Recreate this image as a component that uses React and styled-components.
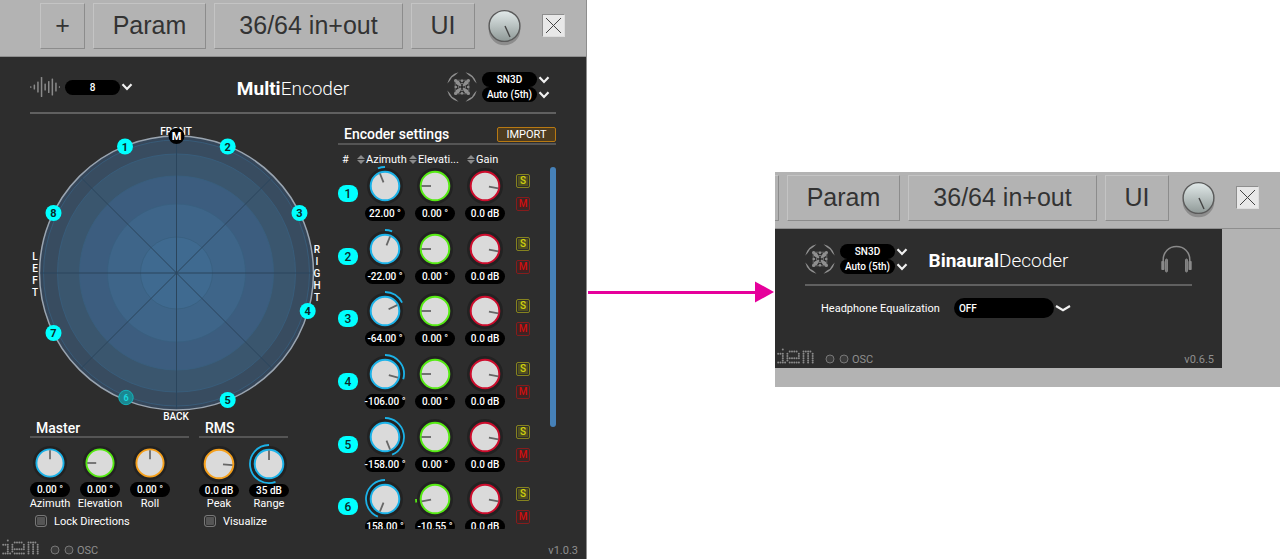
import React, { useState } from "react";
import styled, { createGlobalStyle } from "styled-components";

const sources = [
  { id: 1, azimuth: 22, elevation: 0, x: 95, y: 24.5 },
  { id: 2, azimuth: -22, elevation: 0, x: 197.7, y: 24.5 },
  { id: 3, azimuth: -64, elevation: 0, x: 269.5, y: 91 },
  { id: 4, azimuth: -106, elevation: 0, x: 277.7, y: 189 },
  { id: 5, azimuth: -158, elevation: 0, x: 197.7, y: 278 },
  { id: 6, azimuth: 158, elevation: -10.55, x: 96, y: 275.5, faded: true },
  { id: 7, x: 23.5, y: 211 },
  { id: 8, x: 23.5, y: 91 },
];

const rings = [
  { r: 137, fill: "#36475a" },
  { r: 133, fill: "#384c60" },
  { r: 119, fill: "#3a566e" },
  { r: 97, fill: "#3c5d7f" },
  { r: 69, fill: "#3e6589" },
  { r: 36, fill: "#3f6a90" },
];

const colors = {
  blue: "#1bb2e8",
  green: "#55ea12",
  red: "#cc0c2c",
  orange: "#f5a01c",
};

// 0 degrees points up, positive turns clockwise
const polar = (deg, r) => {
  const a = (deg * Math.PI) / 180;
  return [20 + r * Math.sin(a), 20 - r * Math.cos(a)];
};

const arcPath = (from, to, r) => {
  const [x1, y1] = polar(from, r);
  const [x2, y2] = polar(to, r);
  const large = Math.abs(to - from) > 180 ? 1 : 0;
  const sweep = to > from ? 1 : 0;
  return `M${x1} ${y1} A${r} ${r} 0 ${large} ${sweep} ${x2} ${y2}`;
};

const Knob = ({ name, color, angle, arc, text, size = 40, label }) => {
  const [x1, y1] = polar(angle, 4);
  const [x2, y2] = polar(angle, 13.5);
  return (
    <KnobCell>
      <Dial $size={size}>
        <svg viewBox="0 0 40 40" width={size} height={size}>
          <circle cx="20" cy="20" r="18" fill="#222" />
          <circle
            cx="20"
            cy="20"
            r="14.3"
            fill="#dadada"
            stroke={colors[color]}
            strokeWidth="2"
          />
          <path
            d={`M${x1} ${y1}L${x2} ${y2}`}
            stroke="#666"
            strokeWidth="1.8"
          />
          {arc && (
            <path
              d={arcPath(arc[0], arc[1], 19)}
              fill="none"
              stroke={colors[color]}
              strokeWidth="1.8"
            />
          )}
        </svg>
        <input type="range" min="-180" max="180" aria-label={name} />
      </Dial>
      <Value $low={size === 40 && !!label}>{text}</Value>
      {label && <KnobLabel>{label}</KnobLabel>}
    </KnobCell>
  );
};

const Chevron = ({ wide }) => (
  <svg
    width={wide ? 16 : 12}
    height="8"
    viewBox={wide ? "0 0 16 8" : "0 0 12 8"}
    fill="none"
    stroke="#f0f0f0"
    strokeWidth="2.2"
  >
    <path d={wide ? "M1 2L8 6.2L15 2" : "M1.5 1.2L6 6L10.5 1.2"} />
  </svg>
);

const Dropdown = ({ name, value, variant }) => (
  <SelectLine>
    <Select aria-label={name} defaultValue={value} $variant={variant}>
      <option>{value}</option>
    </Select>
    <Chevron wide={variant === "wide"} />
  </SelectLine>
);

const AmbisonicIcon = () => (
  <svg width="30" height="30" viewBox="0 0 30 30" fill="#8f8f8f">
    {[0, 90, 180, 270].map((a) => (
      <g key={a} transform={`rotate(${a} 15 15)`}>
        <path d="M0.3 11.5 A15.2 15.2 0 0 1 11.5 0.3 Q8.5 3.4 6.3 4.4 Q4.8 5 4.4 6.3 Q3.4 8.5 0.3 11.5Z" />
        <path d="M8 8 L12 9 L14.4 13.6 L13.6 14.4 L9 12Z" />
        <circle cx="8.6" cy="8.6" r="1.6" />
        <circle cx="15" cy="8.8" r="1.3" />
        <circle cx="15" cy="11.6" r="0.8" />
        <circle cx="12" cy="12" r="1.6" />
        <path d="M8 8.2H22" stroke="#8a8a8a" strokeWidth="0.6" />
      </g>
    ))}
  </svg>
);

const waveBars = [1.5, 5, 11, 20, 7, 12, 17, 9, 1.5];

const WaveIcon = () => (
  <svg width="30" height="20" viewBox="0 0 30 20">
    {waveBars.map((h, i) => (
      <rect
        key={i}
        x={i * 3.6}
        y={10 - h / 2}
        width="1.5"
        height={h}
        rx="0.6"
        fill="#8a8a8a"
      />
    ))}
  </svg>
);

const HeadphonesIcon = () => (
  <svg width="31" height="28" viewBox="0 0 31 28" fill="none" stroke="#8a8a8a">
    <path d="M2.2 16.5V15C2.2 6.8 8 1.5 15.5 1.5S28.8 6.8 28.8 15V16.5" strokeWidth="1.5" />
    <rect x="0.3" y="16" width="3.2" height="9" fill="#8a8a8a" stroke="none" rx="0.8" />
    <rect x="27.5" y="16" width="3.2" height="9" fill="#8a8a8a" stroke="none" rx="0.8" />
    <rect x="4.6" y="14" width="1.8" height="13" rx="0.8" fill="#777" />
    <rect x="24.6" y="14" width="1.8" height="13" rx="0.8" fill="#777" />
  </svg>
);

const logoDots = [
  "..#.............",
  ".....####..####.",
  "###.#....#.#.#.#",
  "..#.#....#.#.#.#",
  "..#.######.#.#.#",
  "..#.#......#.#.#",
  "####.#####.#.#.#",
];

const IemLogo = () => (
  <svg width="37" height="16" viewBox="0 0 37 16" fill="#8a8a8a" role="img" aria-label="iem">
    {logoDots.map((row, y) =>
      [...row].map(
        (c, x) =>
          c === "#" && (
            <circle key={`${x}-${y}`} cx={1.2 + x * 2.3} cy={1.4 + y * 2.2} r="1" />
          )
      )
    )}
  </svg>
);

const Toolbar = ({ showAdd }) => (
  <Bar>
    <BarButton $width={45} aria-label="Add">
      {showAdd && "+"}
    </BarButton>
    <BarButton $width={113}>Param</BarButton>
    <BarButton $width={189}>36/64 in+out</BarButton>
    <BarButton $width={64}>UI</BarButton>
    <VolumeDial>
      <svg width="33" height="38" viewBox="0 0 33 38">
        <defs>
          <linearGradient id="metal" x1="0" y1="0" x2="0" y2="1">
            <stop offset="0" stopColor="#e2eaea" />
            <stop offset="1" stopColor="#8f9997" />
          </linearGradient>
        </defs>
        <circle cx="16.5" cy="20.5" r="15.8" fill="#8c8c8c" />
        <circle cx="16.5" cy="17" r="15.4" fill="url(#metal)" stroke="#5a5a5a" strokeWidth="1.4" />
        <path d="M17 17L22 28" stroke="#444" strokeWidth="1.4" />
      </svg>
      <input type="range" aria-label="Volume" />
    </VolumeDial>
    <Toggle>
      <input type="checkbox" defaultChecked aria-label="Toggle window" />
      <svg width="23" height="23" viewBox="0 0 23 23" stroke="#444" strokeWidth="1">
        <path d="M4 4L19 19M19 4L4 19" />
      </svg>
    </Toggle>
  </Bar>
);

const FormatSelects = () => (
  <Group>
    <AmbisonicIcon />
    <SelectStack>
      <Dropdown name="Normalization" value="SN3D" />
      <Dropdown name="Order" value="Auto (5th)" />
    </SelectStack>
  </Group>
);

const PluginFooter = ({ version }) => (
  <Footer>
    <IemLogo />
    <Osc>
      <svg width="24" height="10" viewBox="0 0 24 10" fill="#3a3a3a" stroke="#777">
        <circle cx="5" cy="5" r="4" />
        <circle cx="19" cy="5" r="4" />
      </svg>
      OSC
    </Osc>
    <Version>{version}</Version>
  </Footer>
);

const Sphere = () => (
  <SphereChart viewBox="0 0 294 300" role="img" aria-label="Source positions">
    <text x="146" y="13">FRONT</text>
    {rings.map((ring, i) => (
      <circle
        key={ring.r}
        cx="146.5"
        cy="151"
        r={ring.r}
        fill={ring.fill}
        stroke={i === 0 ? "#9aa5b1" : "#38607f"}
        strokeWidth={i === 0 ? 1.5 : 0.8}
      />
    ))}
    <path
      d="M146.5 15V287M10.5 151H282.5M51.5 56L241.5 246M241.5 56L51.5 246"
      stroke="#2b455c"
      strokeWidth="1"
    />
    <text x="146" y="298">BACK</text>
    {[..."LEFT"].map((c, i) => (
      <text key={i} x="5" y={138 + i * 12}>{c}</text>
    ))}
    {[..."RIGHT"].map((c, i) => (
      <text key={i} x="287" y={131 + i * 12}>{c}</text>
    ))}
    {sources.map((s) => (
      <g key={s.id}>
        <circle
          cx={s.x}
          cy={s.y}
          r={s.faded ? 7.2 : 8}
          fill={s.faded ? "#1b8791" : "#00ffff"}
          stroke={s.faded ? "#12b3bb" : "none"}
        />
        <text
          className={s.faded ? "node faded" : "node"}
          x={s.x}
          y={s.y + (s.faded ? 3 : 4)}
        >
          {s.id}
        </text>
      </g>
    ))}
    <circle cx="146.5" cy="14" r="8" fill="#000" />
    <text className="master" x="146.5" y="18">M</text>
  </SphereChart>
);

const SortButton = ({ children }) => (
  <Sort>
    <svg width="8" height="9" viewBox="0 0 8 9" fill="#8a8a8a">
      <path d="M0 4L4 0L8 4ZM0 5L4 9L8 5Z" />
    </svg>
    {children}
  </Sort>
);

const EncoderRow = ({ source }) => {
  const [solo, setSolo] = useState(false);
  const [mute, setMute] = useState(false);
  const { id, azimuth, elevation } = source;
  const elevationAngle = -90 + elevation;

  return (
    <Row>
      <Badge>{id}</Badge>
      <KnobGroup>
        <Knob
          name={`Azimuth ${id}`}
          color="blue"
          angle={-azimuth}
          arc={[0, -azimuth]}
          text={`${azimuth.toFixed(2)} °`}
        />
        <Knob
          name={`Elevation ${id}`}
          color="green"
          angle={elevationAngle}
          arc={elevation ? [-90, elevationAngle] : null}
          text={`${elevation.toFixed(2)} °`}
        />
        <Knob name={`Gain ${id}`} color="red" angle={100} text="0.0 dB" />
      </KnobGroup>
      <Switches>
        <SwitchButton $color="#d2d20f" $border="#85821f" $fill="#504f20" aria-pressed={solo} onClick={() => setSolo(!solo)}>
          S
        </SwitchButton>
        <SwitchButton $color="#cf1010" $border="#861c1c" $fill="#452020" aria-pressed={mute} onClick={() => setMute(!mute)}>
          M
        </SwitchButton>
      </Switches>
    </Row>
  );
};

const MultiEncoder = () => (
  <Window>
    <Toolbar showAdd />
    <Plugin>
      <Header>
        <Group>
          <WaveIcon />
          <Dropdown name="Number of sources" value="8" />
        </Group>
        <Title>
          <b>Multi</b>Encoder
        </Title>
        <FormatSelects />
      </Header>
      <Body>
        <div>
          <Sphere />
          <Panels>
            <Panel $width={159}>
              <PanelTitle>Master</PanelTitle>
              <KnobGroup>
                <Knob name="Master azimuth" label="Azimuth" color="blue" angle={0} size={38} text="0.00 °" />
                <Knob name="Master elevation" label="Elevation" color="green" angle={-90} size={38} text="0.00 °" />
                <Knob name="Master roll" label="Roll" color="orange" angle={0} size={38} text="0.00 °" />
              </KnobGroup>
              <Check>
                <input type="checkbox" />
                Lock Directions
              </Check>
            </Panel>
            <Panel $width={89}>
              <PanelTitle>RMS</PanelTitle>
              <KnobGroup>
                <Knob name="RMS peak" label="Peak" color="orange" angle={95} text="0.0 dB" />
                <Knob name="RMS range" label="Range" color="blue" angle={0} arc={[0, -200]} text="35 dB" />
              </KnobGroup>
              <Check>
                <input type="checkbox" />
                Visualize
              </Check>
            </Panel>
          </Panels>
        </div>
        <Encoder>
          <EncoderTitle>
            Encoder settings
            <ImportButton>IMPORT</ImportButton>
          </EncoderTitle>
          <Columns>
            <span>#</span>
            <SortButton>Azimuth</SortButton>
            <SortButton>Elevati...</SortButton>
            <SortButton>Gain</SortButton>
          </Columns>
          <ListView>
            <Rows>
              {sources.slice(0, 6).map((s) => (
                <EncoderRow key={s.id} source={s} />
              ))}
            </Rows>
            <ScrollThumb />
          </ListView>
        </Encoder>
      </Body>
      <PluginFooter version="v1.0.3" />
    </Plugin>
  </Window>
);

const BinauralDecoder = () => (
  <Window $lowered>
    <Toolbar />
    <Plugin $inset>
      <Header>
        <FormatSelects />
        <Title>
          <b>Binaural</b>Decoder
        </Title>
        <Group>
          <HeadphonesIcon />
        </Group>
      </Header>
      <Equalization>
        <span>Headphone Equalization</span>
        <Dropdown name="Headphone Equalization" value="OFF" variant="wide" />
      </Equalization>
      <PluginFooter version="v0.6.5" />
    </Plugin>
  </Window>
);

const App = () => (
  <>
    <GlobalStyle />
    <Page>
      <MultiEncoder />
      <Arrow>
        <i />
        <svg width="19" height="22" viewBox="0 0 19 22" fill="#e6009b">
          <path d="M0 0.5L19 11L0 21.5Z" />
        </svg>
      </Arrow>
      <BinauralDecoder />
    </Page>
  </>
);

const GlobalStyle = createGlobalStyle`
  * {
    box-sizing: border-box;
  }
  body {
    margin: 0;
    background: #fff;
    font-family: Roboto, sans-serif;
    color: #fff;
  }
  button, select, input {
    margin: 0;
    padding: 0;
    font-family: inherit;
  }
  svg {
    display: block;
    flex-shrink: 0;
  }
`;

const Page = styled.main`
  display: grid;
  grid-template-columns: 587fr 188fr 505fr;
  align-items: start;
`;

const Window = styled.section`
  min-width: 0;
  margin-top: ${(p) => (p.$lowered ? "172px" : "0")};
  padding-bottom: ${(p) => (p.$lowered ? "19px" : "0")};
  border-right: ${(p) => (p.$lowered ? "none" : "1px solid #8e8e8e")};
  background: #b3b3b3;
`;

const Bar = styled.div`
  display: flex;
  justify-content: flex-end;
  gap: 8px;
  height: 57px;
  padding: 3px 21px 0;
  overflow: hidden;
  border-bottom: 1px solid #8e8e8e;
`;

const BarButton = styled.button`
  flex-shrink: 0;
  width: ${(p) => p.$width}px;
  height: 46px;
  padding-bottom: 1px;
  border: 1px solid;
  border-color: #c4c4c4 #8c8c8c #8c8c8c #c4c4c4;
  background: #b3b3b3;
  color: #333;
  font-family: "Liberation Sans", Arial, sans-serif;
  font-size: 25px;
  white-space: nowrap;
`;

const VolumeDial = styled.div`
  position: relative;
  flex-shrink: 0;
  width: 33px;
  height: 38px;
  margin: 6px 13px 0 5px;

  input {
    position: absolute;
    inset: 0;
    width: 100%;
    opacity: 0;
  }
`;

const Toggle = styled.label`
  position: relative;
  flex-shrink: 0;
  width: 23px;
  height: 23px;
  margin-top: 11px;

  input {
    display: block;
    width: 23px;
    height: 23px;
    appearance: none;
    border: 1px solid;
    border-color: #8e8e8e #ddd #ddd #8e8e8e;
    background: #e8e8e8;
  }
  svg {
    position: absolute;
    inset: 0;
    pointer-events: none;
  }
  input:not(:checked) + svg {
    display: none;
  }
`;

const Plugin = styled.div`
  width: ${(p) => (p.$inset ? "calc(100% - 58px)" : "100%")};
  background: #2d2d2d;
`;

const Header = styled.header`
  display: grid;
  grid-template-columns: 1fr auto 1fr;
  align-items: center;
  height: 57px;
  margin: 0 30px;
  padding-top: 5px;
  border-bottom: 2px solid #606060;
`;

const Group = styled.div`
  display: flex;
  align-items: center;
  gap: 5px;

  &:last-child {
    justify-self: end;
  }
  ${Header} > &:last-child:has(select) {
    padding-right: 6px;
  }
`;

const Title = styled.h1`
  margin: 0;
  padding-top: 3px;
  font-size: 19px;
  font-weight: 300;
  line-height: 24px;

  b {
    font-weight: 700;
  }
`;

const SelectStack = styled.div`
  display: flex;
  flex-direction: column;
`;

const SelectLine = styled.div`
  display: flex;
  align-items: center;
  gap: 1px;
`;

const Select = styled.select`
  width: ${(p) => (p.$variant === "wide" ? "100px" : "55px")};
  height: ${(p) => (p.$variant === "wide" ? "20px" : "15px")};
  padding: 0 ${(p) => (p.$variant === "wide" ? "5px" : "0")};
  appearance: none;
  border: none;
  border-radius: 10px;
  background: #000;
  color: #fff;
  font-size: 10px;
  font-weight: 500;
  line-height: 15px;
  text-align: ${(p) => (p.$variant === "wide" ? "left" : "center")};
  text-align-last: ${(p) => (p.$variant === "wide" ? "left" : "center")};
`;

const Body = styled.div`
  display: grid;
  grid-template-columns: 294px minmax(218px, 1fr);
  gap: 14px;
  padding: 8px 30px 10px;
`;

const SphereChart = styled.svg`
  width: 294px;
  height: 300px;

  text {
    fill: #fff;
    font-size: 10px;
    font-weight: 500;
    text-anchor: middle;
  }
  .node {
    fill: #0a2a2a;
    font-size: 11px;
    font-weight: 700;
  }
  .faded {
    fill: #19d6dd;
    font-size: 9px;
  }
  .master {
    font-size: 11px;
    font-weight: 700;
  }
`;

const Panels = styled.div`
  display: flex;
  gap: 10px;
`;

const Panel = styled.section`
  width: ${(p) => p.$width}px;
`;

const PanelTitle = styled.h2`
  height: 16px;
  margin: 0 0 6px;
  padding-left: 6px;
  border-bottom: 2px solid #555;
  font-size: 14px;
  font-weight: 500;
  line-height: 12px;
`;

const KnobGroup = styled.div`
  display: flex;
  gap: 10px;
`;

const KnobCell = styled.div`
  display: flex;
  flex-direction: column;
  align-items: center;
  width: 40px;
`;

const Dial = styled.div`
  position: relative;
  height: ${(p) => p.$size}px;

  input {
    position: absolute;
    inset: 0;
    width: 100%;
    height: 100%;
    opacity: 0;
  }
`;

const Value = styled.output`
  display: flex;
  align-items: center;
  justify-content: center;
  width: 40px;
  height: ${(p) => (p.$low ? "13px" : "15px")};
  border-radius: 8px;
  background: #000;
  font-size: 10px;
  font-weight: 500;
  line-height: 15px;
  white-space: nowrap;
`;

const KnobLabel = styled.span`
  font-size: 11px;
  line-height: 14px;
`;

const Check = styled.label`
  display: flex;
  align-items: center;
  gap: 7px;
  height: 12px;
  margin-top: 4px;
  padding-left: 5px;
  font-size: 11px;
  white-space: nowrap;

  input {
    width: 12px;
    height: 12px;
    appearance: none;
    border: 1px solid #777;
    border-radius: 3px;
    background: #555;
    box-shadow: inset 0 0 0 1px #2d2d2d;
  }
`;

const Encoder = styled.section`
  padding-top: 5px;
`;

const EncoderTitle = styled.h2`
  display: flex;
  justify-content: space-between;
  height: 18px;
  margin: 0;
  padding-left: 6px;
  border-bottom: 2px solid #555;
  font-size: 14px;
  font-weight: 500;
  line-height: 15px;
`;

const ImportButton = styled.button`
  width: 59px;
  height: 15px;
  border: 1px solid #b87912;
  border-radius: 2px;
  background: #4e3c1f;
  color: #fff;
  font-size: 11px;
  line-height: 12px;
`;

const Columns = styled.div`
  display: grid;
  grid-template-columns: 19px 52px 58px auto;
  height: 21px;
  padding-top: 8px;
  font-size: 11px;
  line-height: 13px;

  span {
    padding-left: 4px;
  }
`;

const Sort = styled.button`
  display: flex;
  align-items: center;
  gap: 1px;
  border: none;
  background: none;
  color: #fff;
  font-size: 11px;
  line-height: 13px;
`;

const ListView = styled.div`
  display: flex;
  justify-content: space-between;
  height: 363px;
  overflow: hidden;
`;

const Rows = styled.div`
  display: grid;
  grid-template-rows: repeat(6, 1fr);
  height: 376px;
`;

const ScrollThumb = styled.div`
  width: 6px;
  height: 260px;
  margin-top: 1px;
  border-radius: 3px;
  background: #4681b8;
`;

const Row = styled.div`
  display: flex;
  align-items: flex-start;
`;

const Badge = styled.span`
  width: 20px;
  height: 17px;
  margin: 19px 7px 0 0;
  border-radius: 8px;
  background: #00ffff;
  color: #0a2a2a;
  font-size: 12px;
  font-weight: 500;
  line-height: 18px;
  text-align: center;
`;

const Switches = styled.div`
  display: flex;
  flex-direction: column;
  gap: 9px;
  margin: 8px 0 0 11px;
`;

const SwitchButton = styled.button`
  width: 14px;
  height: 14px;
  border: 1px solid ${(p) => p.$border};
  border-radius: 2px;
  background: ${(p) => p.$fill};
  box-shadow: inset 0 0 0 1px #2d2d2d;
  color: ${(p) => p.$color};
  font-size: 10px;
  font-weight: 500;
  line-height: 12px;
`;

const Equalization = styled.div`
  display: flex;
  align-items: center;
  gap: 14px;
  height: 20px;
  margin: 12px 30px 30px 46px;
  font-size: 11px;
`;

const Footer = styled.footer`
  display: flex;
  align-items: center;
  height: 20px;
  padding: 0 8px 0 2px;
  color: #8f8f8f;
  font-size: 11px;

  > svg {
    align-self: flex-start;
  }
`;

const Osc = styled.div`
  display: flex;
  align-items: center;
  gap: 3px;
  margin-left: 11px;
  padding-top: 2px;
`;

const Version = styled.span`
  margin-left: auto;
  padding-top: 2px;
`;

const Arrow = styled.div`
  display: flex;
  align-items: center;
  margin-top: 281px;
  padding: 0 1px;

  i {
    flex: 1;
    height: 3px;
    background: #e6009b;
  }
`;

export default App;
